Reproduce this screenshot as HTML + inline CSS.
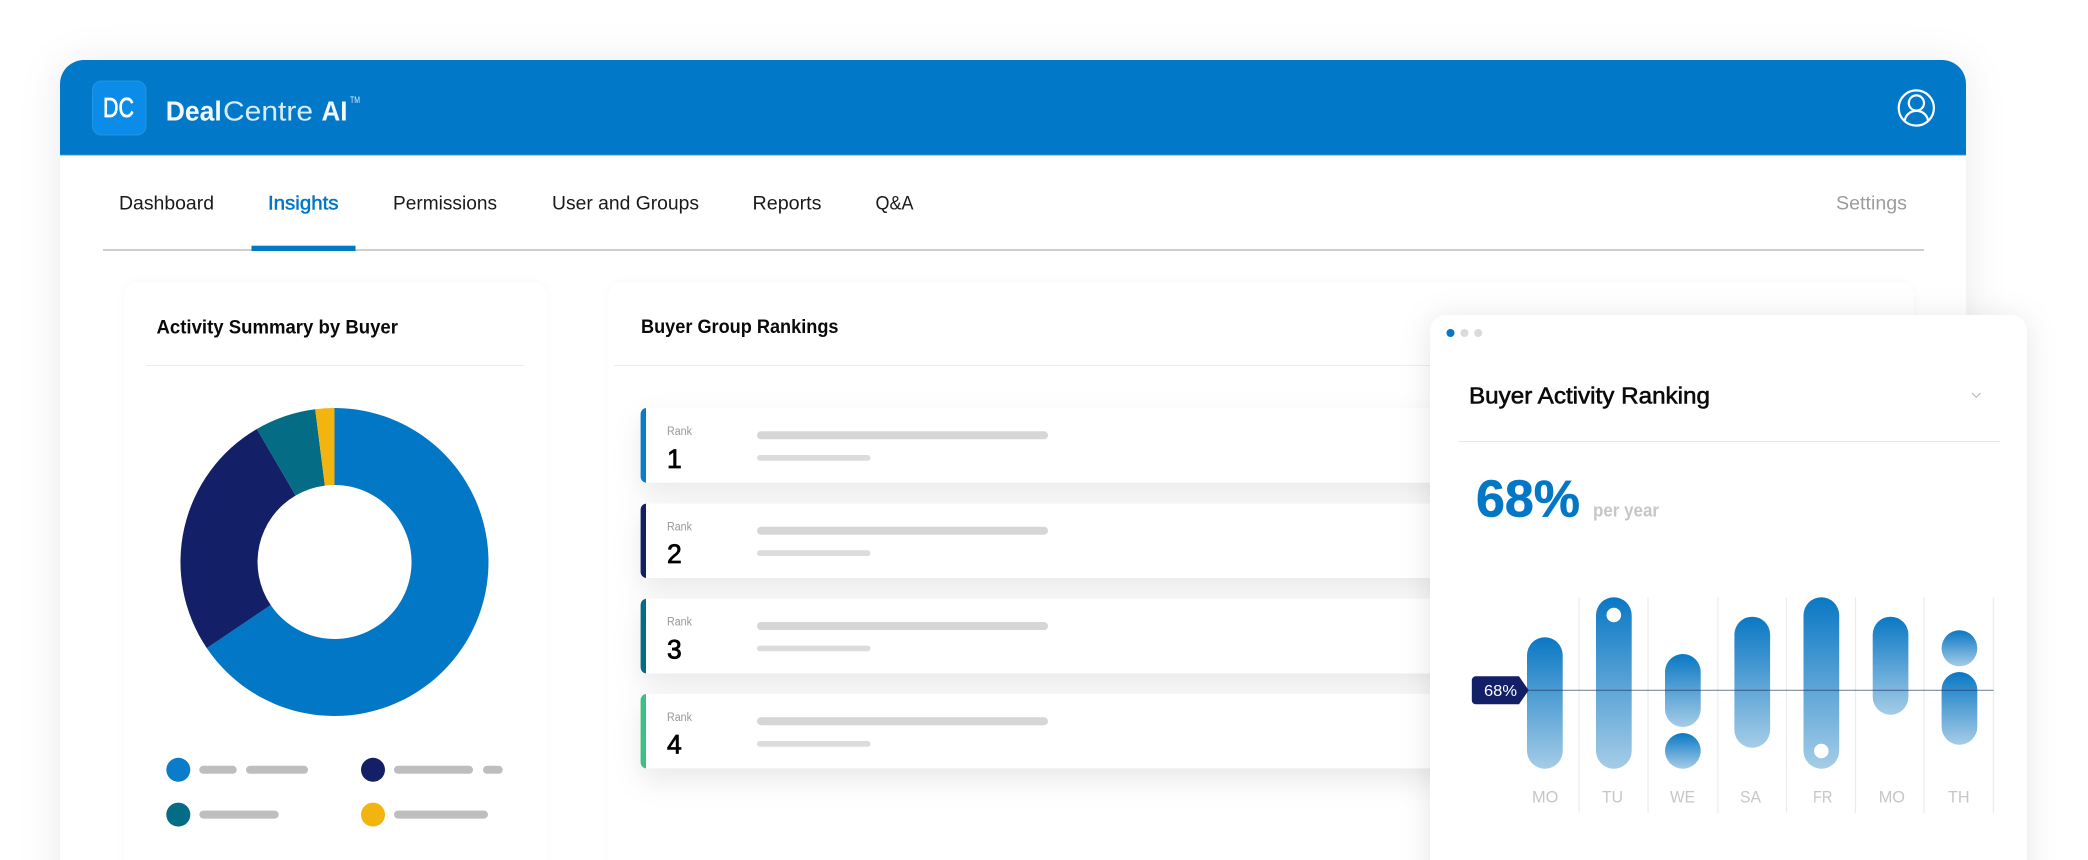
<!DOCTYPE html>
<html lang="en">
<head>
<meta charset="utf-8">
<title>DealCentre AI</title>
<style>
html,body{margin:0;padding:0;background:#fff;width:2088px;height:860px;overflow:hidden}
svg{display:block}
text{font-family:"Liberation Sans",Arial,sans-serif}
.sb{stroke:currentColor;stroke-width:.5px}
</style>
</head>
<body>
<svg width="2088" height="860" viewBox="0 0 2088 860" xmlns="http://www.w3.org/2000/svg">
<defs>
<linearGradient id="g" x1="0" y1="0" x2="0" y2="1">
<stop offset="0" stop-color="#0a78c4"/>
<stop offset="1" stop-color="#a5cce7"/>
</linearGradient>
<clipPath id="hd"><path d="M60 155V84a24 24 0 0 1 24-24H1942a24 24 0 0 1 24 24V155Z"/></clipPath>
</defs>

<!-- main card -->
<path d="M60 900V84a24 24 0 0 1 24-24H1942a24 24 0 0 1 24 24V900Z" fill="#fff" style="filter:drop-shadow(0 3px 20px rgba(0,0,0,.085))"/>
<rect x="60" y="60" width="1906" height="95" fill="#0278c9" clip-path="url(#hd)"/>
<rect x="60" y="154.4" width="1906" height="1" fill="#2d93dc"/>

<!-- logo -->
<rect x="92.5" y="81" width="53.5" height="54" rx="9" fill="#0a8ce8" stroke="#3ea6ee" stroke-opacity=".5"/>
<text x="103" y="117" font-size="27.5" fill="#fff" color="#fff" class="sb" style="stroke-width:.7px" textLength="31" lengthAdjust="spacingAndGlyphs">DC</text>
<text x="165.7" y="120.5" font-size="28" font-weight="700" fill="#f2f8fd" textLength="56" lengthAdjust="spacingAndGlyphs">Deal</text>
<text x="223" y="120.5" font-size="28" fill="#d8ecfa" textLength="90" lengthAdjust="spacingAndGlyphs">Centre</text>
<text x="321.5" y="120.5" font-size="28" font-weight="700" fill="#f2f8fd" textLength="26" lengthAdjust="spacingAndGlyphs">AI</text>
<text x="350" y="103" font-size="9" fill="#d8ecfa" textLength="10" lengthAdjust="spacingAndGlyphs">TM</text>

<!-- user icon -->
<g fill="none" stroke="#fff" stroke-width="2.2">
<circle cx="1916.3" cy="108" r="17.6"/>
<circle cx="1916.4" cy="103" r="7.6"/>
<path d="M1904.6 121.4C1905.4 114.6 1910.6 110.9 1916.4 110.9C1922.2 110.9 1927.4 114.6 1928.2 121.4"/>
</g>

<!-- nav -->
<text x="119" y="209.5" font-size="19" fill="#1a1a1a" textLength="95" lengthAdjust="spacingAndGlyphs">Dashboard</text>
<text x="268" y="209.5" font-size="19" fill="#0277c6" color="#0277c6" class="sb" textLength="70.5" lengthAdjust="spacingAndGlyphs">Insights</text>
<text x="393" y="209.5" font-size="19" fill="#1a1a1a" textLength="104" lengthAdjust="spacingAndGlyphs">Permissions</text>
<text x="552" y="209.5" font-size="19" fill="#1a1a1a" textLength="147" lengthAdjust="spacingAndGlyphs">User and Groups</text>
<text x="752.5" y="209.5" font-size="19" fill="#1a1a1a" textLength="69" lengthAdjust="spacingAndGlyphs">Reports</text>
<text x="875.5" y="209.5" font-size="19" fill="#1a1a1a" textLength="38" lengthAdjust="spacingAndGlyphs">Q&amp;A</text>
<text x="1836" y="209.5" font-size="19" fill="#9c9c9c" textLength="71" lengthAdjust="spacingAndGlyphs">Settings</text>
<rect x="103" y="249" width="1821" height="2" fill="#cfcfcf"/>
<rect x="251.5" y="245.7" width="104" height="5.3" fill="#0277c6"/>

<!-- activity panel -->
<path d="M124 900V296a14 14 0 0 1 14-14H533a14 14 0 0 1 14 14V900Z" fill="#fff" style="filter:drop-shadow(0 0 4px rgba(0,0,0,.03))"/>
<text x="156.5" y="333.5" font-size="19.5" font-weight="700" fill="#0a0a0a" textLength="241.5" lengthAdjust="spacingAndGlyphs">Activity Summary by Buyer</text>
<rect x="145.7" y="365" width="378.5" height="1" fill="#ececec"/>

<!-- donut -->
<path d="M334.5 408A154 154 0 1 1 206.8 648.1L270.7 605.05A77 77 0 1 0 334.5 485Z" fill="#0277c6"/>
<path d="M206.8 648.1A154 154 0 0 1 256.8 429L295.65 495.5A77 77 0 0 0 270.7 605.05Z" fill="#131f66"/>
<path d="M256.8 429A154 154 0 0 1 315.2 409.2L324.85 485.6A77 77 0 0 0 295.65 495.5Z" fill="#046c85"/>
<path d="M315.2 409.2A154 154 0 0 1 334.5 408V485A77 77 0 0 0 324.85 485.6Z" fill="#f2b50f"/>

<!-- legend -->
<circle cx="178.3" cy="769.8" r="12" fill="#0a7cc9"/>
<circle cx="373" cy="769.8" r="12" fill="#131f66"/>
<circle cx="178.3" cy="814.6" r="12" fill="#046c85"/>
<circle cx="373" cy="814.6" r="12" fill="#f2b50f"/>
<g fill="#bebebe">
<rect x="199.3" y="765.8" width="37.4" height="8" rx="4"/>
<rect x="246" y="765.8" width="62" height="8" rx="4"/>
<rect x="394" y="765.8" width="79" height="8" rx="4"/>
<rect x="483" y="765.8" width="19.7" height="8" rx="4"/>
<rect x="199.3" y="810.6" width="79.4" height="8" rx="4"/>
<rect x="394" y="810.6" width="94" height="8" rx="4"/>
</g>

<!-- rankings panel -->
<path d="M608 900V296a14 14 0 0 1 14-14H1900a14 14 0 0 1 14 14V900Z" fill="#fff" style="filter:drop-shadow(0 0 4px rgba(0,0,0,.03))"/>
<text x="641" y="333" font-size="19.5" font-weight="700" fill="#0a0a0a" textLength="197.5" lengthAdjust="spacingAndGlyphs">Buyer Group Rankings</text>
<rect x="614" y="365" width="830" height="1" fill="#ececec"/>

<!-- rank shadows + cards -->
<g style="filter:drop-shadow(0 12px 14px rgba(0,0,0,.085))">
<path d="M647 408H1500V482.7H647a6 6 0 0 1-6-6V414a6 6 0 0 1 6-6Z" fill="#fff"/>
<path d="M647 503.6H1500V578H647a6 6 0 0 1-6-6V509.6a6 6 0 0 1 6-6Z" fill="#fff"/>
<path d="M647 598.8H1500V673.4H647a6 6 0 0 1-6-6V604.8a6 6 0 0 1 6-6Z" fill="#fff"/>
<path d="M647 694H1500V768.4H647a6 6 0 0 1-6-6V700a6 6 0 0 1 6-6Z" fill="#fff"/>
</g>
<path d="M646 408a6 6 0 0 0-5.4 6V476.7a6 6 0 0 0 5.4 6Z" fill="#0a7cc9"/>
<path d="M646 503.6a6 6 0 0 0-5.4 6V572a6 6 0 0 0 5.4 6Z" fill="#131f66"/>
<path d="M646 598.8a6 6 0 0 0-5.4 6V667.4a6 6 0 0 0 5.4 6Z" fill="#046c85"/>
<path d="M646 694a6 6 0 0 0-5.4 6V762.4a6 6 0 0 0 5.4 6Z" fill="#3cc083"/>

<g font-size="11.5" fill="#989898">
<text x="667" y="435" textLength="25" lengthAdjust="spacingAndGlyphs">Rank</text>
<text x="667" y="530.4" textLength="25" lengthAdjust="spacingAndGlyphs">Rank</text>
<text x="667" y="625.6" textLength="25" lengthAdjust="spacingAndGlyphs">Rank</text>
<text x="667" y="721" textLength="25" lengthAdjust="spacingAndGlyphs">Rank</text>
</g>
<g font-size="26.5" fill="#000" color="#000" class="sb" style="stroke-width:.8px">
<text x="667" y="468">1</text>
<text x="667" y="563.2">2</text>
<text x="667" y="658.4">3</text>
<text x="667" y="753.6">4</text>
</g>
<g fill="#d6d6d6">
<rect x="757" y="431.3" width="291" height="8" rx="4"/>
<rect x="757" y="526.7" width="291" height="8" rx="4"/>
<rect x="757" y="622" width="291" height="8" rx="4"/>
<rect x="757" y="717.2" width="291" height="8" rx="4"/>
</g>
<g fill="#dcdcdc">
<rect x="757" y="455" width="113.5" height="5.7" rx="2.8"/>
<rect x="757" y="550.3" width="113.5" height="5.7" rx="2.8"/>
<rect x="757" y="645.6" width="113.5" height="5.7" rx="2.8"/>
<rect x="757" y="741" width="113.5" height="5.7" rx="2.8"/>
</g>

<!-- overlay card -->
<path d="M1430 900V331a16 16 0 0 1 16-16H2011a16 16 0 0 1 16 16V900Z" fill="#fff" style="filter:drop-shadow(0 3px 15px rgba(0,0,0,.10))"/>
<circle cx="1450.5" cy="333" r="4" fill="#0277c6"/>
<circle cx="1464.5" cy="333" r="4" fill="#dadada"/>
<circle cx="1478.2" cy="333" r="4" fill="#dadada"/>
<text x="1469" y="403.5" font-size="23.5" fill="#0a0a0a" color="#0a0a0a" class="sb" style="stroke-width:.6px" textLength="241" lengthAdjust="spacingAndGlyphs">Buyer Activity Ranking</text>
<path d="M1972 393l4.3 4.3 4.3-4.3" fill="none" stroke="#b9b9b9" stroke-width="1.2"/>
<rect x="1458.4" y="441" width="541.6" height="1" fill="#e6e6e6"/>

<text x="1476" y="516.7" font-size="52" font-weight="700" fill="#0277c6" color="#0277c6" class="sb" style="stroke-width:.6px" textLength="104" lengthAdjust="spacingAndGlyphs">68%</text>
<text x="1593" y="516.7" font-size="18" font-weight="700" fill="#c6c6c6" textLength="66" lengthAdjust="spacingAndGlyphs">per year</text>

<!-- grid lines -->
<g fill="#ececec">
<rect x="1578.4" y="597.3" width="1.3" height="215.5"/>
<rect x="1647.4" y="597.3" width="1.3" height="215.5"/>
<rect x="1717.2" y="597.3" width="1.3" height="215.5"/>
<rect x="1785.9" y="597.3" width="1.3" height="215.5"/>
<rect x="1854.8" y="597.3" width="1.3" height="215.5"/>
<rect x="1923.4" y="597.3" width="1.3" height="215.5"/>
<rect x="1992.8" y="597.3" width="1.3" height="215.5"/>
</g>

<!-- bars -->
<g fill="url(#g)">
<rect x="1527" y="637.3" width="35.7" height="131.4" rx="17.85"/>
<rect x="1596" y="597.3" width="35.7" height="171.4" rx="17.85"/>
<rect x="1665" y="654" width="35.7" height="73" rx="17.85"/>
<rect x="1665" y="733" width="35.7" height="35.7" rx="17.85"/>
<rect x="1734.4" y="616.7" width="35.7" height="131" rx="17.85"/>
<rect x="1803.5" y="597.3" width="35.7" height="171.4" rx="17.85"/>
<rect x="1872.7" y="616.7" width="35.7" height="98" rx="17.85"/>
<rect x="1941.6" y="630.3" width="35.7" height="36" rx="17.85"/>
<rect x="1941.6" y="672" width="35.7" height="72.7" rx="17.85"/>
</g>
<circle cx="1613.8" cy="615" r="7.3" fill="#fff"/>
<circle cx="1821.3" cy="751" r="7.3" fill="#fff"/>
<rect x="1527" y="689.7" width="466.5" height="1.3" fill="#1e2f5e" fill-opacity=".5"/>

<!-- tag -->
<path d="M1475.8 676.3H1519L1528.7 690.3L1519 704.3H1475.8a4 4 0 0 1-4-4V680.3a4 4 0 0 1 4-4Z" fill="#131f66"/>
<text x="1484" y="696" font-size="16" fill="#fff" textLength="33" lengthAdjust="spacingAndGlyphs">68%</text>

<!-- day labels -->
<g font-size="16.5" fill="#c6c6c6">
<text x="1532" y="802.7" textLength="26.4" lengthAdjust="spacingAndGlyphs">MO</text>
<text x="1602" y="802.7" textLength="21" lengthAdjust="spacingAndGlyphs">TU</text>
<text x="1670" y="802.7" textLength="25" lengthAdjust="spacingAndGlyphs">WE</text>
<text x="1740" y="802.7" textLength="21" lengthAdjust="spacingAndGlyphs">SA</text>
<text x="1813" y="802.7" textLength="19.4" lengthAdjust="spacingAndGlyphs">FR</text>
<text x="1878.7" y="802.7" textLength="26.3" lengthAdjust="spacingAndGlyphs">MO</text>
<text x="1948" y="802.7" textLength="21.6" lengthAdjust="spacingAndGlyphs">TH</text>
</g>
</svg>
</body>
</html>
